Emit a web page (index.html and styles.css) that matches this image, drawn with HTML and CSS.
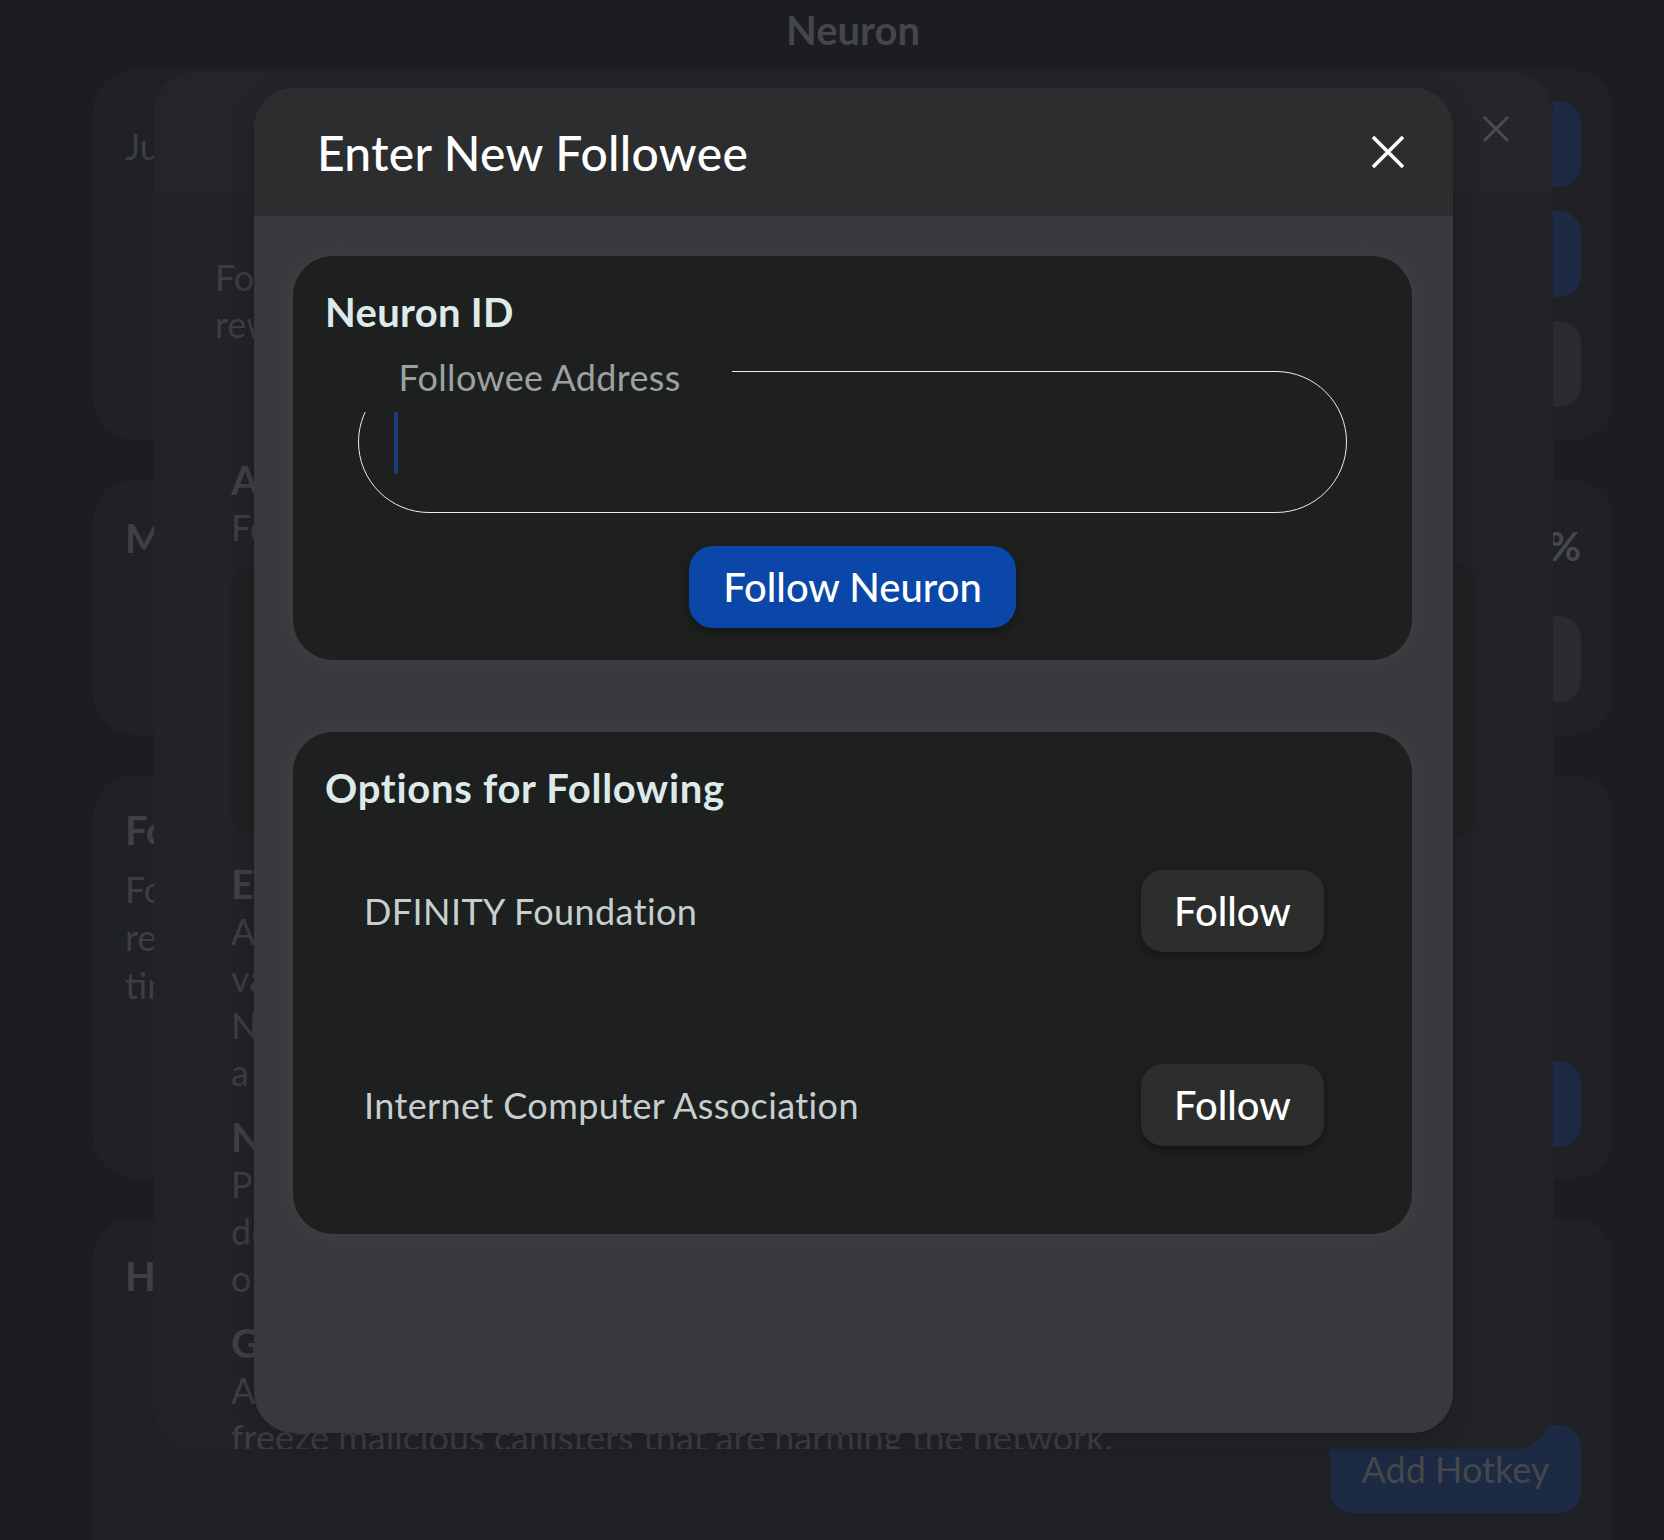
FILE: index.html
```html
<!DOCTYPE html>
<html lang="en">
<head>
<meta charset="utf-8">
<title>Enter New Followee</title>
<link rel="stylesheet" href="styles.css">
</head>
<body>
<main class="page">
  <h1 class="page-title">Neuron</h1>

  <section class="pcard pcard-a">
    <div class="pcard-text">
      <p class="ptext">Just staked, dissolve delay of 6 months</p>
    </div>
    <div class="pcard-actions">
      <span class="pbtn pbtn-blue">Dissolve</span>
      <span class="pbtn pbtn-blue">Disburse</span>
      <span class="pbtn pbtn-gray">Split</span>
    </div>
  </section>

  <section class="pcard pcard-b">
    <div class="pcard-text">
      <h2 class="phead">Maturity</h2>
    </div>
    <div class="pcard-actions">
      <span class="pcent">0%</span>
      <span class="pbtn pbtn-gray pbtn-low">Merge</span>
    </div>
  </section>

  <section class="pcard pcard-c">
    <div class="pcard-text">
      <h2 class="phead">Following</h2>
      <p class="ptext">Follow neurons to automate your voting, and</p>
      <p class="ptext">receive the maximum voting rewards. You can follow</p>
      <p class="ptext">time-limited topics or all topics.</p>
    </div>
    <div class="pcard-actions pcard-actions-end">
      <span class="pbtn pbtn-blue">Follow</span>
    </div>
  </section>

  <section class="pcard pcard-d">
    <div class="pcard-text">
      <h2 class="phead">Hotkeys</h2>
    </div>
    <div class="pcard-actions">
      <span class="pbtn pbtn-blue pbtn-hotkey">Add Hotkey</span>
    </div>
  </section>
</main>

<div class="modal-back">
  <div class="mb-header">
    <h2 class="mb-title">Follow Neurons</h2>
    <svg class="mb-close" width="28" height="28" viewBox="0 0 28 28" aria-hidden="true">
      <path d="M2 2 L26 26 M26 2 L2 26" stroke="#4a4b4e" stroke-width="3" fill="none"/>
    </svg>
  </div>
  <div class="mb-body">
    <p class="mb-intro"><span>Follow neurons to automate your voting, and receive the maximum</span><span>rewards. You can follow neurons on specific topics or all topics.</span></p>

    <div class="mb-section mb-first">
      <h3 class="mb-head">All Topics</h3>
      <p class="mb-text"><span>Follow neurons on all proposal topics except Governance.</span></p>
      <div class="mb-box"></div>
    </div>

    <div class="mb-section mb-second">
      <h3 class="mb-head">Exchange Rate</h3>
      <p class="mb-text"><span>All proposals that provide &ldquo;real time&rdquo; information about the</span><span>value of ICP, as measured by an IMF SDR, which allows the</span><span>NNS to convert ICP to cycles (which power computation) at</span><span>a rate which keeps their real world cost constant.</span></p>
    </div>

    <div class="mb-section">
      <h3 class="mb-head">Network Economics</h3>
      <p class="mb-text"><span>Proposals that administer network economics, for example,</span><span>determining what rewards should be paid to node operators.</span><span>or the rewards for governance participation.</span></p>
    </div>

    <div class="mb-section">
      <h3 class="mb-head">Governance</h3>
      <p class="mb-text"><span>All proposals that administer governance, for example to</span><span>freeze malicious canisters that are harming the network.</span></p>
    </div>
  </div>
</div>

<div class="modal-front" role="dialog" aria-labelledby="mf-title">
  <header class="mf-header">
    <h2 class="mf-title" id="mf-title">Enter New Followee</h2>
    <svg class="mf-close" width="34" height="34" viewBox="0 0 34 34" aria-label="Close">
      <path d="M2 2 L32 32 M32 2 L2 32" stroke="#ffffff" stroke-width="3.6" fill="none"/>
    </svg>
  </header>
  <div class="mf-body">
    <section class="card card-id">
      <h3 class="card-title">Neuron ID</h3>
      <div class="field">
        <span class="field-label">Followee Address</span>
        <span class="caret"></span>
      </div>
      <div class="btn-row">
        <button class="btn-primary" type="button">Follow Neuron</button>
      </div>
    </section>

    <section class="card card-options">
      <h3 class="card-title card-title-wide">Options for Following</h3>
      <ul class="options">
        <li class="option">
          <span class="option-name">DFINITY Foundation</span>
          <button class="btn-follow" type="button">Follow</button>
        </li>
        <li class="option">
          <span class="option-name">Internet Computer Association</span>
          <button class="btn-follow" type="button">Follow</button>
        </li>
      </ul>
    </section>
  </div>
</div>
</body>
</html>
```

FILE: styles.css
```css
* { box-sizing: border-box; }

html, body { margin: 0; padding: 0; }

body {
  width: 1664px;
  height: 1540px;
  overflow: hidden;
  position: relative;
  background: #1c1d20;
  font-family: Lato, "Noto Sans", Arial, sans-serif;
}

/* ---------- page behind (dimmed) ---------- */
.page {
  width: 1520px;
  height: 1540px;
  overflow: hidden;
  margin-left: 93px;
  display: flex;
  flex-direction: column;
  gap: 40px;
}

.page-title {
  flex: none;
  margin: 0 0 -40px;
  padding-top: 6px;
  height: 70px;
  text-align: center;
  font-size: 40px;
  line-height: 48px;
  font-weight: 700;
  color: #44464a;
}

.pcard {
  flex: none;
  background: #202124;
  border-radius: 40px;
  padding: 31px 32px;
  display: flex;
  justify-content: space-between;
}

.pcard-a { height: 370px; }
.pcard-b { height: 255px; }
.pcard-c { height: 403px; }
.pcard-d { height: 360px; padding-bottom: 0; border-radius: 40px 40px 0 0; }

.pcard-text { display: flex; flex-direction: column; }

.ptext {
  margin: 0;
  font-size: 36px;
  line-height: 48px;
  color: #3c3e42;
  white-space: nowrap;
}

.pcard-a .ptext { margin-top: 21px; }

.phead {
  margin: 0 0 4px;
  font-size: 40px;
  line-height: 48px;
  font-weight: 700;
  color: #3e4044;
}

.pcard-b .phead { margin-top: 3px; }
.pcard-c .phead { margin-bottom: 11px; }
.pcard-d .phead { margin-top: 3px; }

.pcard-actions {
  width: 251px;
  display: flex;
  flex-direction: column;
  gap: 24px;
  align-items: stretch;
}

.pcard-actions-end { justify-content: flex-end; }

.pbtn {
  height: 86px;
  border-radius: 22px;
  display: flex;
  align-items: center;
  justify-content: center;
  font-size: 36px;
  color: #45474a;
  white-space: nowrap;
}

.pbtn-blue { background: #1c2a44; }
.pbtn-gray { background: #2a2b2e; }
.pbtn-low { margin-top: 22px; }

.pcent {
  align-self: flex-end;
  margin-top: 11px;
  font-size: 40px;
  font-weight: 700;
  line-height: 48px;
  color: #45474a;
}

.pcard-d .pcard-actions { padding-top: 176px; }
.pbtn-hotkey { height: 88px; }

/* ---------- back modal ---------- */
.modal-back {
  position: absolute;
  left: 154px;
  top: 72px;
  width: 1399px;
  height: 1377px;
  border-radius: 40px;
  background: #222326;
  overflow: hidden;
  display: flex;
  flex-direction: column;
}

.mb-header {
  height: 120px;
  flex: none;
  background: #242528;
  display: flex;
  justify-content: space-between;
  align-items: flex-start;
  padding: 43px 43px 0 400px;
}

.mb-title {
  margin: 0;
  font-size: 40px;
  line-height: 48px;
  font-weight: 400;
  color: #45474a;
}

.mb-close { display: block; }

.mb-body {
  padding: 62px 61px 0;
}

.mb-intro, .mb-text {
  margin: 0;
  font-size: 36px;
  line-height: 47px;
  color: #3c3e42;
}

.mb-intro span, .mb-text span { display: block; white-space: nowrap; }

.mb-section {
  margin: 17px 16px 0;
}

.mb-first { margin-top: 108px; }
.mb-second { margin-top: 25px; }

.mb-head {
  margin: 0;
  font-size: 40px;
  line-height: 48px;
  font-weight: 700;
  color: #3e4044;
}

.mb-box {
  margin-top: 14px;
  height: 270px;
  border-radius: 20px;
  background: #1f2022;
}

/* ---------- front modal ---------- */
.modal-front {
  position: absolute;
  left: 254px;
  top: 88px;
  width: 1199px;
  height: 1345px;
  border-radius: 40px;
  background: #38393c;
  overflow: hidden;
  display: flex;
  flex-direction: column;
  box-shadow: 0 6px 24px rgba(0, 0, 0, 0.2);
}

.mf-header {
  height: 128px;
  flex: none;
  background: #2c2d2e;
  display: flex;
  align-items: center;
  justify-content: space-between;
  padding: 0 48px 0 63px;
}

.mf-title {
  margin: 0;
  font-size: 48px;
  font-weight: 500;
  color: #ffffff;
  letter-spacing: 0.3px;
}

.mf-close { display: block; }

.mf-body {
  flex: 1;
  padding: 40px 41px 40px 39px;
  display: flex;
  flex-direction: column;
  gap: 72px;
}

.card {
  background: #1e1f1f;
  border-radius: 40px;
  padding: 32px;
  box-shadow: 0 0 28px rgba(78, 80, 86, 0.45);
}

.card-title {
  margin: 0;
  font-size: 40px;
  line-height: 48px;
  font-weight: 700;
  color: #dcebea;
  letter-spacing: 0.3px;
}

.card-title-wide { letter-spacing: 0.7px; }

.field {
  position: relative;
  margin: 35px 33px 0;
  height: 142px;
  border: 1.5px solid #ececec;
  border-radius: 71px;
  display: flex;
  align-items: center;
  padding-left: 35px;
}

.field-label {
  position: absolute;
  left: 5.5px;
  top: -30.5px;
  width: 367px;
  height: 70px;
  padding-left: 34px;
  background: #1e1f1f;
  font-size: 36px;
  line-height: 70px;
  color: #9aa2a2;
  letter-spacing: 0.3px;
  white-space: nowrap;
}

.caret {
  display: block;
  width: 4px;
  height: 63px;
  border-radius: 2px;
  background: #1d3c7c;
}

.btn-row {
  margin-top: 33px;
  display: flex;
  justify-content: center;
}

.btn-primary {
  height: 82px;
  padding: 0 34px;
  border: 0;
  border-radius: 24px;
  background: #0a47a8;
  color: #ffffff;
  font-family: inherit;
  font-size: 40px;
  font-weight: 500;
  box-shadow: 0 4px 10px rgba(0, 0, 0, 0.35);
}

.options {
  list-style: none;
  margin: 2px 0 0;
  padding: 0;
}

.option {
  height: 194px;
  display: flex;
  align-items: center;
  justify-content: space-between;
  padding: 0 56px 0 39px;
}

.option-name {
  font-size: 36px;
  color: #c5cfcf;
  letter-spacing: 0.4px;
}

.btn-follow {
  width: 183px;
  height: 82px;
  border: 0;
  border-radius: 22px;
  background: #2c2d2d;
  color: #ffffff;
  font-family: inherit;
  font-size: 40px;
  font-weight: 500;
  box-shadow: 0 4px 10px rgba(0, 0, 0, 0.35);
}
```
